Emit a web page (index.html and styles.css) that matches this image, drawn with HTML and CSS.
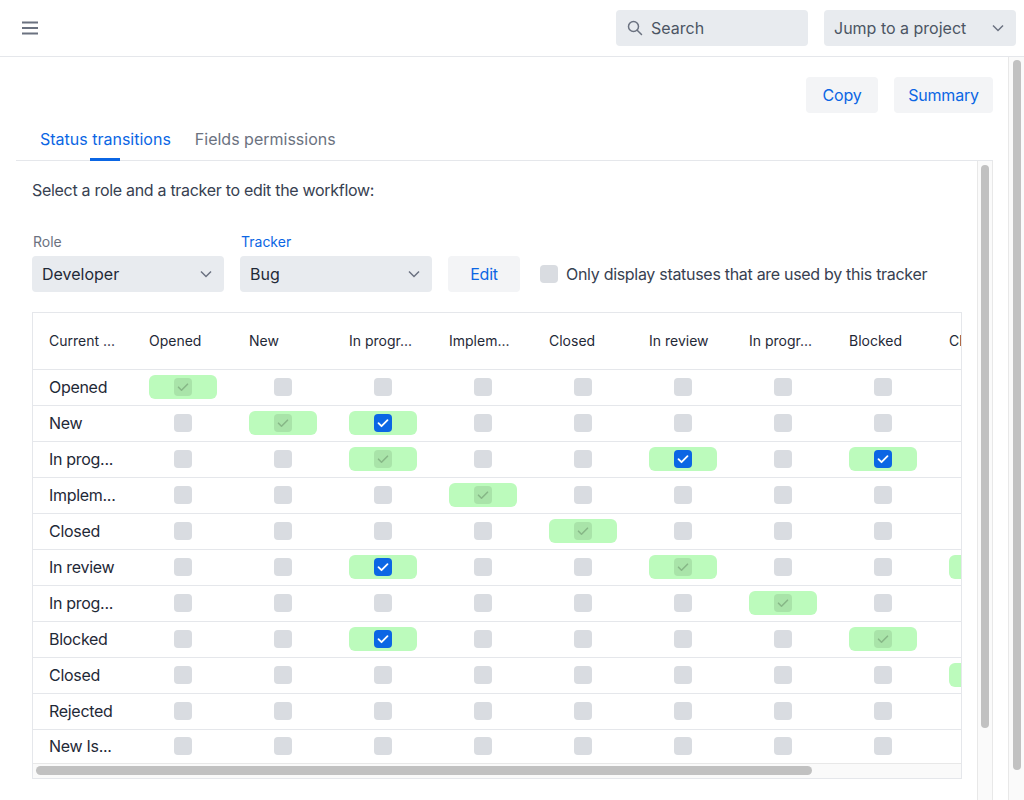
FILE: index.html
```html
<!DOCTYPE html>
<html lang="en">
<head>
<meta charset="utf-8">
<title>Workflow</title>
<link rel="stylesheet" href="styles.css">
</head>
<body>
<header class="topbar">
  <button class="menu-btn" aria-label="Menu">
    <svg width="16" height="14" viewBox="0 0 16 14"><path d="M0 1.5h16M0 7h16M0 12.5h16" stroke="#6b7280" stroke-width="2" fill="none"/></svg>
  </button>
  <div class="topbar-right">
    <div class="search">
      <svg width="16" height="16" viewBox="0 0 16 16"><circle cx="6.5" cy="6.5" r="5" stroke="#6b7280" stroke-width="1.5" fill="none"/><path d="M10.2 10.2L14.5 14.5" stroke="#6b7280" stroke-width="1.5" stroke-linecap="round"/></svg>
      <span>Search</span>
    </div>
    <div class="jump">
      <span>Jump to a project</span>
      <svg width="12" height="8" viewBox="0 0 12 8"><path d="M1 1.5l5 5 5-5" stroke="#6b7280" stroke-width="1.5" fill="none"/></svg>
    </div>
  </div>
</header>
<div class="page">
  <main class="main">
    <div class="toolbar">
      <button class="btn copy">Copy</button>
      <button class="btn summary">Summary</button>
    </div>
    <nav class="tabs">
      <div class="tab active">Status transitions</div>
      <div class="tab">Fields permissions</div>
    </nav>
    <div class="panel-wrap">
      <section class="panel">
        <p class="intro">Select a role and a tracker to edit the workflow:</p>
        <div class="form-row">
          <div class="field">
            <label class="field-label">Role</label>
            <div class="select"><span>Developer</span><svg width="12" height="8" viewBox="0 0 12 8"><path d="M1 1.5l5 5 5-5" stroke="#6b7280" stroke-width="1.5" fill="none"/></svg></div>
          </div>
          <div class="field">
            <label class="field-label focus">Tracker</label>
            <div class="select"><span>Bug</span><svg width="12" height="8" viewBox="0 0 12 8"><path d="M1 1.5l5 5 5-5" stroke="#6b7280" stroke-width="1.5" fill="none"/></svg></div>
          </div>
          <button class="btn edit">Edit</button>
          <label class="only"><span class="cb"></span>Only display statuses that are used by this tracker</label>
        </div>
        <div class="table-wrap">
          <div class="table-scroll">
            <table class="wf">
              <thead>
                <tr><th>Current ...</th><th>Opened</th><th>New</th><th>In progr...</th><th>Implem...</th><th>Closed</th><th>In review</th><th>In progr...</th><th>Blocked</th><th>Cl</th><th>Rejected</th></tr>
              </thead>
              <tbody>
                <tr><td>Opened</td><td><div class="cell hl"><span class="cb dis"></span></div></td><td><div class="cell"><span class="cb"></span></div></td><td><div class="cell"><span class="cb"></span></div></td><td><div class="cell"><span class="cb"></span></div></td><td><div class="cell"><span class="cb"></span></div></td><td><div class="cell"><span class="cb"></span></div></td><td><div class="cell"><span class="cb"></span></div></td><td><div class="cell"><span class="cb"></span></div></td><td><div class="cell"><span class="cb"></span></div></td><td><div class="cell"><span class="cb"></span></div></td></tr>
                <tr><td>New</td><td><div class="cell"><span class="cb"></span></div></td><td><div class="cell hl"><span class="cb dis"></span></div></td><td><div class="cell hl"><span class="cb on"></span></div></td><td><div class="cell"><span class="cb"></span></div></td><td><div class="cell"><span class="cb"></span></div></td><td><div class="cell"><span class="cb"></span></div></td><td><div class="cell"><span class="cb"></span></div></td><td><div class="cell"><span class="cb"></span></div></td><td><div class="cell"><span class="cb"></span></div></td><td><div class="cell"><span class="cb"></span></div></td></tr>
                <tr><td>In prog...</td><td><div class="cell"><span class="cb"></span></div></td><td><div class="cell"><span class="cb"></span></div></td><td><div class="cell hl"><span class="cb dis"></span></div></td><td><div class="cell"><span class="cb"></span></div></td><td><div class="cell"><span class="cb"></span></div></td><td><div class="cell hl"><span class="cb on"></span></div></td><td><div class="cell"><span class="cb"></span></div></td><td><div class="cell hl"><span class="cb on"></span></div></td><td><div class="cell"><span class="cb"></span></div></td><td><div class="cell"><span class="cb"></span></div></td></tr>
                <tr><td>Implem...</td><td><div class="cell"><span class="cb"></span></div></td><td><div class="cell"><span class="cb"></span></div></td><td><div class="cell"><span class="cb"></span></div></td><td><div class="cell hl"><span class="cb dis"></span></div></td><td><div class="cell"><span class="cb"></span></div></td><td><div class="cell"><span class="cb"></span></div></td><td><div class="cell"><span class="cb"></span></div></td><td><div class="cell"><span class="cb"></span></div></td><td><div class="cell"><span class="cb"></span></div></td><td><div class="cell"><span class="cb"></span></div></td></tr>
                <tr><td>Closed</td><td><div class="cell"><span class="cb"></span></div></td><td><div class="cell"><span class="cb"></span></div></td><td><div class="cell"><span class="cb"></span></div></td><td><div class="cell"><span class="cb"></span></div></td><td><div class="cell hl"><span class="cb dis"></span></div></td><td><div class="cell"><span class="cb"></span></div></td><td><div class="cell"><span class="cb"></span></div></td><td><div class="cell"><span class="cb"></span></div></td><td><div class="cell"><span class="cb"></span></div></td><td><div class="cell"><span class="cb"></span></div></td></tr>
                <tr><td>In review</td><td><div class="cell"><span class="cb"></span></div></td><td><div class="cell"><span class="cb"></span></div></td><td><div class="cell hl"><span class="cb on"></span></div></td><td><div class="cell"><span class="cb"></span></div></td><td><div class="cell"><span class="cb"></span></div></td><td><div class="cell hl"><span class="cb dis"></span></div></td><td><div class="cell"><span class="cb"></span></div></td><td><div class="cell"><span class="cb"></span></div></td><td><div class="cell hl"><span class="cb on"></span></div></td><td><div class="cell"><span class="cb"></span></div></td></tr>
                <tr><td>In prog...</td><td><div class="cell"><span class="cb"></span></div></td><td><div class="cell"><span class="cb"></span></div></td><td><div class="cell"><span class="cb"></span></div></td><td><div class="cell"><span class="cb"></span></div></td><td><div class="cell"><span class="cb"></span></div></td><td><div class="cell"><span class="cb"></span></div></td><td><div class="cell hl"><span class="cb dis"></span></div></td><td><div class="cell"><span class="cb"></span></div></td><td><div class="cell"><span class="cb"></span></div></td><td><div class="cell"><span class="cb"></span></div></td></tr>
                <tr><td>Blocked</td><td><div class="cell"><span class="cb"></span></div></td><td><div class="cell"><span class="cb"></span></div></td><td><div class="cell hl"><span class="cb on"></span></div></td><td><div class="cell"><span class="cb"></span></div></td><td><div class="cell"><span class="cb"></span></div></td><td><div class="cell"><span class="cb"></span></div></td><td><div class="cell"><span class="cb"></span></div></td><td><div class="cell hl"><span class="cb dis"></span></div></td><td><div class="cell"><span class="cb"></span></div></td><td><div class="cell"><span class="cb"></span></div></td></tr>
                <tr><td>Closed</td><td><div class="cell"><span class="cb"></span></div></td><td><div class="cell"><span class="cb"></span></div></td><td><div class="cell"><span class="cb"></span></div></td><td><div class="cell"><span class="cb"></span></div></td><td><div class="cell"><span class="cb"></span></div></td><td><div class="cell"><span class="cb"></span></div></td><td><div class="cell"><span class="cb"></span></div></td><td><div class="cell"><span class="cb"></span></div></td><td><div class="cell hl"><span class="cb dis"></span></div></td><td><div class="cell"><span class="cb"></span></div></td></tr>
                <tr><td>Rejected</td><td><div class="cell"><span class="cb"></span></div></td><td><div class="cell"><span class="cb"></span></div></td><td><div class="cell"><span class="cb"></span></div></td><td><div class="cell"><span class="cb"></span></div></td><td><div class="cell"><span class="cb"></span></div></td><td><div class="cell"><span class="cb"></span></div></td><td><div class="cell"><span class="cb"></span></div></td><td><div class="cell"><span class="cb"></span></div></td><td><div class="cell"><span class="cb"></span></div></td><td><div class="cell hl"><span class="cb dis"></span></div></td></tr>
                <tr><td>New Is...</td><td><div class="cell"><span class="cb"></span></div></td><td><div class="cell"><span class="cb"></span></div></td><td><div class="cell"><span class="cb"></span></div></td><td><div class="cell"><span class="cb"></span></div></td><td><div class="cell"><span class="cb"></span></div></td><td><div class="cell"><span class="cb"></span></div></td><td><div class="cell"><span class="cb"></span></div></td><td><div class="cell"><span class="cb"></span></div></td><td><div class="cell"><span class="cb"></span></div></td><td><div class="cell"><span class="cb"></span></div></td></tr>
              </tbody>
            </table>
          </div>
          <div class="hbar"><div class="hbar-thumb"></div></div>
        </div>
      </section>
      <div class="vbar panel-bar"><div class="vbar-thumb"></div></div>
    </div>
  </main>
  <div class="vbar page-bar"><div class="vbar-thumb"></div></div>
</div>
</body>
</html>
```
FILE: styles.css
```css
* { box-sizing: border-box; }
html, body { margin: 0; padding: 0; height: 100%; }
body {
  font-family: Inter, "Liberation Sans", sans-serif;
  font-size: 16px;
  color: #1f2937;
  background: #fff;
  overflow: hidden;
}
button { font-family: inherit; font-size: 16px; border: 0; cursor: pointer; }

.topbar {
  height: 57px;
  border-bottom: 1px solid #e5e7eb;
  display: flex;
  align-items: center;
  justify-content: space-between;
  padding: 0 8px 1px 22px;
}
.menu-btn { background: none; padding: 0; display: flex; }
.topbar-right { display: flex; gap: 16px; }
.search, .jump {
  width: 192px;
  height: 36px;
  background: #e8ebef;
  border-radius: 4px;
  display: flex;
  align-items: center;
  color: #4b5563;
}
.search { padding-left: 11px; gap: 8px; }
.jump { padding: 0 12px 0 10px; justify-content: space-between; }

/* page area with its own (drawn) scrollbar */
.page {
  display: flex;
  height: calc(100vh - 57px);
}
.main {
  flex: 1;
  min-width: 0;
  overflow: hidden;
  padding: 20px 15px 0 16px;
}

.vbar {
  flex: none;
  width: 16px;
  background: #fafafa;
  border-left: 1px solid #e8e8e8;
  padding: 0 3px 0 4px;
}
.vbar-thumb {
  width: 8px;
  background: #c1c1c1;
  border-radius: 4px;
}
.page-bar .vbar-thumb { margin-top: 3px; height: 710px; }
.panel-bar { border-right: 1px solid #e8e8e8; padding: 0 3px 0 3px; }
.panel-bar .vbar-thumb { margin-top: 4px; height: 563px; }

.toolbar { display: flex; justify-content: flex-end; gap: 16px; }
.btn {
  height: 36px;
  padding: 0;
  background: #f3f4f6;
  color: #0b66e4;
  border-radius: 4px;
  letter-spacing: -0.2px;
}
.copy { width: 72px; }
.summary { width: 99px; }

.tabs {
  display: flex;
  margin-top: 7px;
  padding-left: 12px;
  border-bottom: 1px solid #e5e7eb;
}
.tab {
  position: relative;
  height: 40px;
  padding: 0 12px 2px;
  display: flex;
  align-items: center;
  color: #6b7280;
}
.tab.active { color: #0b66e4; }
.tab.active::after {
  content: "";
  position: absolute;
  left: 50%;
  bottom: -1px;
  width: 30px;
  height: 3px;
  margin-left: -15px;
  background: #0b66e4;
}

.panel-wrap {
  display: flex;
  height: 660px;
}
.panel {
  flex: 1;
  min-width: 0;
  overflow: hidden;
  padding: 17px 15px 0 16px;
}
.intro { margin: 0; line-height: 24px; color: #374151; letter-spacing: -0.3px; }

.form-row {
  display: flex;
  align-items: flex-end;
  gap: 16px;
  margin-top: 30px;
}
.field { display: flex; flex-direction: column; gap: 4px; }
.field-label { font-size: 14px; line-height: 20px; color: #6b7280; padding-left: 1px; }
.field-label.focus { color: #0b66e4; }
.select {
  width: 192px;
  height: 36px;
  background: #e8ebef;
  border-radius: 4px;
  display: flex;
  align-items: center;
  justify-content: space-between;
  padding: 0 12px 0 10px;
  color: #1f2937;
}
.edit { width: 72px; }
.only {
  display: flex;
  align-items: center;
  gap: 8px;
  height: 36px;
  margin-left: 4px;
  color: #374151;
  letter-spacing: -0.3px;
}

.table-wrap {
  margin-top: 20px;
  border: 1px solid #e5e7eb;
}
.table-scroll { overflow: hidden; }
.hbar {
  height: 15px;
  background: #fafafa;
  border-top: 1px solid #e8e8e8;
  padding: 2px 0 0 3px;
}
.hbar-thumb {
  width: 776px;
  height: 9px;
  background: #c1c1c1;
  border-radius: 5px;
}

.wf {
  border-collapse: collapse;
  table-layout: fixed;
  width: 1100px;
}
.wf th, .wf td {
  width: 100px;
  padding: 0 16px;
  text-align: left;
  white-space: nowrap;
  overflow: hidden;
}
.wf th {
  height: 56px;
  font-size: 14px;
  font-weight: 400;
  color: #1f2937;
  border-bottom: 1px solid #e5e7eb;
}
.wf td { height: 36px; border-bottom: 1px solid #e5e7eb; color: #1f2937; letter-spacing: -0.3px; }
.wf tbody tr:last-child td { border-bottom: 0; height: 34px; }

.cell {
  height: 24px;
  border-radius: 6px;
  display: flex;
  align-items: center;
  justify-content: center;
}
.cell.hl { background: #bcfbbc; }

.cb {
  width: 18px;
  height: 18px;
  border-radius: 4px;
  background: #d9dce1;
  display: inline-block;
  flex: none;
}
.cb.on {
  background: #0b66e4 url("data:image/svg+xml,%3Csvg xmlns='http://www.w3.org/2000/svg' width='18' height='18'%3E%3Cpath d='M4.5 9.2l3 3 6-6' stroke='white' stroke-width='1.8' fill='none' stroke-linecap='round' stroke-linejoin='round'/%3E%3C/svg%3E") center no-repeat;
}
.cb.dis {
  background: #a9e4a9 url("data:image/svg+xml,%3Csvg xmlns='http://www.w3.org/2000/svg' width='18' height='18'%3E%3Cpath d='M4.5 9.2l3 3 6-6' stroke='%2388b888' stroke-width='1.6' fill='none' stroke-linecap='round' stroke-linejoin='round'/%3E%3C/svg%3E") center no-repeat;
}
```
